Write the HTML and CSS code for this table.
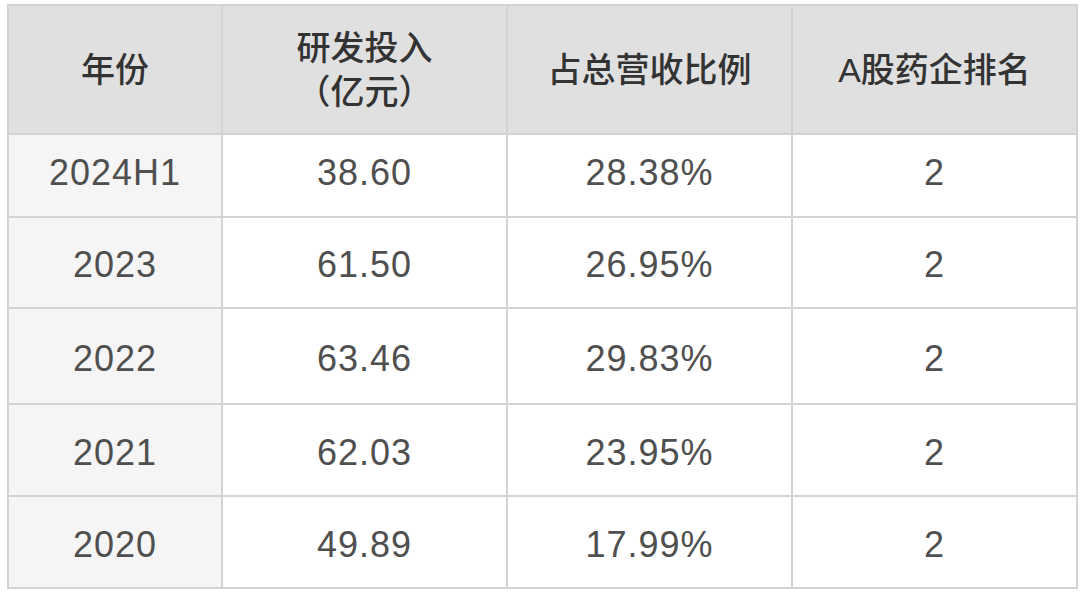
FILE: index.html
```html
<!DOCTYPE html>
<html lang="zh">
<head>
<meta charset="utf-8">
<link rel="stylesheet" href="styles.css">
</head>
<body>
<table class="data">
  <colgroup>
    <col class="c1"><col class="c2"><col class="c3"><col class="c4">
  </colgroup>
  <thead>
    <tr class="head">
      <th>年份</th>
      <th><span class="line">研发投入</span><span class="line">（亿元）</span></th>
      <th>占总营收比例</th>
      <th>A股药企排名</th>
    </tr>
  </thead>
  <tbody>
    <tr class="r1"><td class="year">2024H1</td><td>38.60</td><td>28.38%</td><td>2</td></tr>
    <tr class="r2"><td class="year">2023</td><td>61.50</td><td>26.95%</td><td>2</td></tr>
    <tr class="r3"><td class="year">2022</td><td>63.46</td><td>29.83%</td><td>2</td></tr>
    <tr class="r4"><td class="year">2021</td><td>62.03</td><td>23.95%</td><td>2</td></tr>
    <tr class="r5"><td class="year">2020</td><td>49.89</td><td>17.99%</td><td>2</td></tr>
  </tbody>
</table>
</body>
</html>
```
FILE: styles.css
```css
html, body {
  margin: 0;
  padding: 0;
  background: #ffffff;
}
body {
  padding: 4px 0 0 7px;
  font-family: "Liberation Sans", "Noto Sans CJK SC", sans-serif;
}
.data {
  border-collapse: collapse;
  table-layout: fixed;
  width: 1069px;
}
.c1 { width: 214px; }
.c2 { width: 285px; }
.c3 { width: 285px; }
.c4 { width: 285px; }
.data th, .data td {
  border: 2px solid #d3d3d3;
  text-align: center;
  vertical-align: middle;
  padding: 0;
}
.data th {
  background: #e0e0e0;
  color: #333333;
  font-weight: 500;
  font-size: 34px;
  line-height: 44px;
  font-family: "Liberation Sans", "Noto Sans CJK SC", sans-serif;
}
.line {
  display: block;
  height: 44px;
}
.head { height: 129px; }
.data td {
  font-size: 36px;
  letter-spacing: 1px;
  color: #4f4f4f;
  padding-top: 5px;
}
.data td.year { background: #f5f5f5; }
.r1 { height: 83px; }
.r1 td { padding-top: 0; padding-bottom: 6px; }
.r2 { height: 91px; }
.r3 { height: 96px; }
.r4 { height: 92px; }
.r5 { height: 92px; }
```
